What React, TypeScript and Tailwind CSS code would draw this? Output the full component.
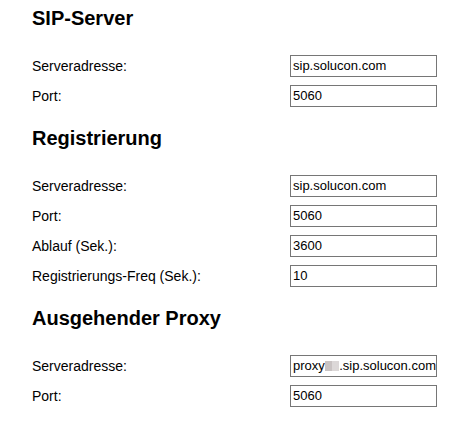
import React from "react";

const labelCls = "text-[14px] leading-[30px] text-black";

function Field({ label, value }: { label: string; value: React.ReactNode }) {
  return (
    <div className="flex h-[30px] items-center">
      <div className={`w-[258px] ${labelCls}`}>{label}</div>
      <div
        className="flex h-[22px] w-[147px] items-center overflow-hidden whitespace-nowrap border border-[#767676] bg-white pl-[2px] text-[13px] text-black"
        style={{ fontFamily: '"Liberation Sans", Arial, sans-serif' }}
      >
        {value}
      </div>
    </div>
  );
}

function Section({ title, children }: { title: string; children: React.ReactNode }) {
  return (
    <section className="flex flex-col">
      <h2 className="mb-[21px] text-[20px] font-bold leading-[24px] text-black">{title}</h2>
      {children}
    </section>
  );
}

export default function App() {
  return (
    <div
      className="flex min-h-[423px] w-[467px] flex-col gap-[15px] bg-white pl-[32px] pt-[6px]"
      style={{ fontFamily: '"Liberation Sans", Arial, sans-serif' }}
    >
      <Section title="SIP-Server">
        <Field label="Serveradresse:" value="sip.solucon.com" />
        <Field label="Port:" value="5060" />
      </Section>
      <Section title="Registrierung">
        <Field label="Serveradresse:" value="sip.solucon.com" />
        <Field label="Port:" value="5060" />
        <Field label="Ablauf (Sek.):" value="3600" />
        <Field label="Registrierungs-Freq (Sek.):" value="10" />
      </Section>
      <Section title="Ausgehender Proxy">
        <Field
          label="Serveradresse:"
          value={
            <>
              <span>proxy</span>
              <span className="inline-flex h-[10px] w-[15px]">
                <span className="h-full w-1/2 bg-[#c9c3c3]" />
                <span className="h-full w-1/2 bg-[#dcd8d8]" />
              </span>
              <span>.sip.solucon.com</span>
            </>
          }
        />
        <Field label="Port:" value="5060" />
      </Section>
    </div>
  );
}
